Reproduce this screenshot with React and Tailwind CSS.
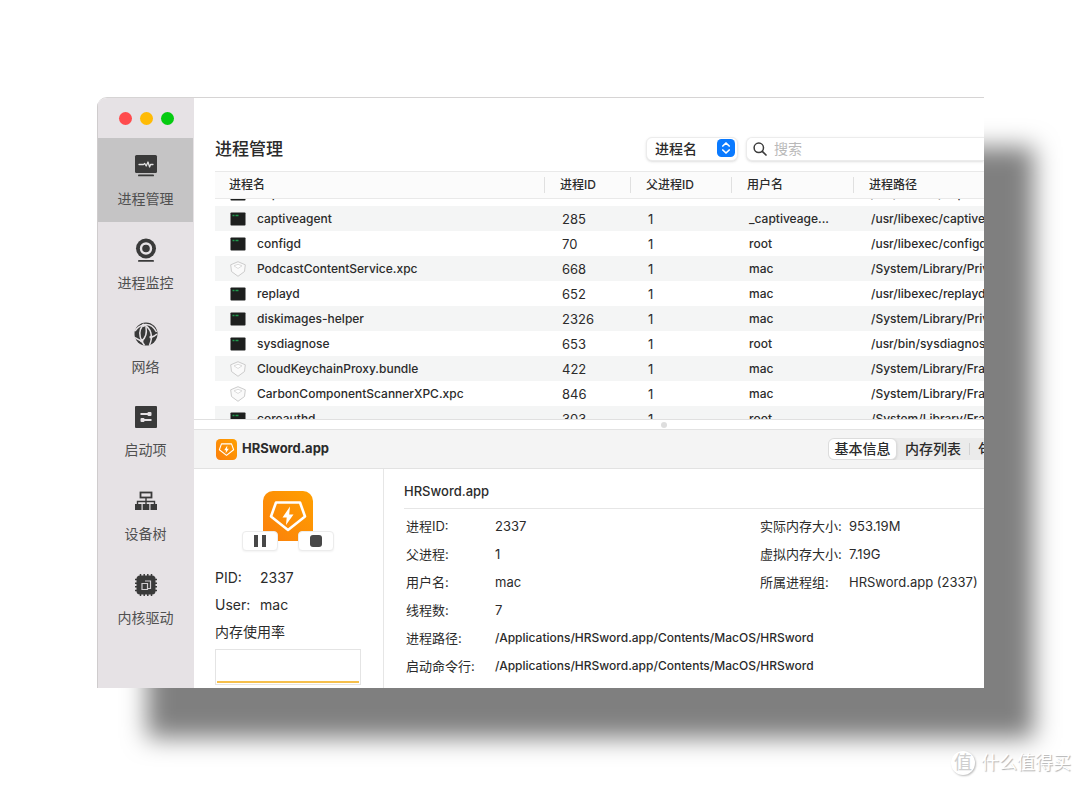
import { useLayoutEffect, useRef, useState } from "react";

const ink = "#3a3a3a";

function MonitorIcon() {
  return (
    <svg width="24" height="24" viewBox="0 0 24 24" aria-hidden="true">
      <rect x="1" y="1" width="22" height="18" rx="1.500" fill={ink} />
      <path d="M5 10.500h4.500l1.200-1 1.500 2.500 1.800-4 1.600 5 1-2.500H19" fill="none" stroke="#e0e0e0" strokeWidth="1.300" strokeLinejoin="round" strokeLinecap="round" />
      <rect x="4" y="20.500" width="16" height="1.800" rx=".9" fill={ink} />
    </svg>
  );
}

function CameraIcon() {
  return (
    <svg width="24" height="24" viewBox="0 0 24 24" aria-hidden="true">
      <circle cx="12" cy="10.500" r="10" fill={ink} />
      <circle cx="12" cy="10.500" r="5" fill="none" stroke="#e6e2e5" strokeWidth="2.400" />
      <rect x="4" y="22" width="16" height="1.800" rx=".9" fill={ink} />
    </svg>
  );
}

function NetworkIcon() {
  return (
    <svg width="24" height="24" viewBox="0 0 24 24" aria-hidden="true">
      <circle cx="12" cy="12" r="11.500" fill={ink} />
      <g fill="none" stroke="#e6e2e5" strokeWidth="1.500">
        <path d="M8.500 3.500C5 8.500 5 14 8 19.500l2.500 4" />
        <path d="M9.500 2.500C17 6 19.500 14 15.500 23" />
        <path d="M1 9C3 6 5.500 4 9 3" />
        <path d="M1 15.500c2.500 2 4.500 2.500 6.500 3.500" />
        <path d="M11 2.500C16 2 20 5 22.500 10" />
        <path d="M8 18.500C12 15.500 13 11 12 5" />
        <path d="M17.500 15c2.500-.5 4-1.500 5.500-3" />
      </g>
      <g fill="#e6e2e5">
        <circle cx="9.500" cy="3.300" r="1.700" />
        <circle cx="7.800" cy="18.700" r="1.800" />
        <circle cx="17" cy="15" r="1.600" />
      </g>
    </svg>
  );
}

function StartupIcon() {
  return (
    <svg width="24" height="24" viewBox="0 0 24 24" aria-hidden="true">
      <rect x="1" y="1" width="22" height="22" rx="1" fill={ink} />
      <path d="M6.500 9h10M7.500 15h10" stroke="#e6e2e5" strokeWidth="1.800" />
      <rect x="13.500" y="7" width="4" height="4" rx="1" fill="#e6e2e5" />
      <rect x="6.500" y="13" width="4" height="4" rx="1" fill="#e6e2e5" />
    </svg>
  );
}

function TreeIcon() {
  return (
    <svg width="24" height="24" viewBox="0 0 24 24" aria-hidden="true">
      <rect x="6.500" y="3.500" width="11" height="5" fill="none" stroke={ink} strokeWidth="1.800" />
      <path d="M12 9v6M3.500 15v-2.500h17V15" fill="none" stroke={ink} strokeWidth="1.400" />
      <path d="M1 15h6.500v6H1zM8.700 15h6.600v6H8.700zM16.500 15H23v6h-6.500z" fill={ink} />
    </svg>
  );
}

function ChipIcon() {
  return (
    <svg width="24" height="24" viewBox="0 0 24 24" aria-hidden="true">
      <path d="M6.500 1v22M10.200 1v22M13.800 1v22M17.500 1v22M1 6.500h22M1 10.200h22M1 13.800h22M1 17.500h22" stroke={ink} strokeWidth="1.500" />
      <rect x="2.500" y="2.500" width="19" height="19" rx="3.500" fill={ink} />
      <path d="M11 8h5.500v7.500H14M13.500 16.500H8V10.500h5.500z" fill="none" stroke="#cfcccf" strokeWidth="1.200" />
    </svg>
  );
}

function TerminalIcon() {
  return (
    <svg width="16" height="16" viewBox="0 0 16 16" aria-hidden="true">
      <rect x=".5" y="1.500" width="15" height="13" rx=".8" fill="#1d1f1e" />
      <path d="M2.500 4.500h2M5.500 4.500h3" stroke="#1f9a4c" strokeWidth="1.400" />
    </svg>
  );
}

function ShieldIcon() {
  return (
    <svg width="16" height="16" viewBox="0 0 16 16" aria-hidden="true">
      <path d="M8 .7 15.300 3.800 14.500 10.500 8 15.300 1.500 10.500.7 3.800z" fill="#fafafa" stroke="#cbcbcb" strokeWidth="1" strokeLinejoin="round" />
      <path d="M4 4.800 8 7.500l4-2.700-4-1.500z" fill="#fff" stroke="#d8d8d8" strokeWidth=".9" strokeLinejoin="round" />
    </svg>
  );
}

function AppIcon({ className, id }) {
  return (
    <svg className={className} viewBox="0 0 50 50" aria-hidden="true">
      <defs>
        <linearGradient id={id} x1="0" y1="1" x2="1" y2="0">
          <stop offset="0" stopColor="#fb7f0c" />
          <stop offset="1" stopColor="#ffa000" />
        </linearGradient>
      </defs>
      <rect width="50" height="50" rx="10" fill={`url(#${id})`} />
      <path d="M13 11.500h24l5 14L25 39 8 25.500z" fill="none" stroke="#fff" strokeWidth="2.600" strokeLinejoin="round" />
      <path d="M27 15.500 19.500 26.500h4.200L23 34l7.500-10.500h-4.300z" fill="#fff" />
    </svg>
  );
}

const sections = [
  { label: "进程管理", Icon: MonitorIcon },
  { label: "进程监控", Icon: CameraIcon },
  { label: "网络", Icon: NetworkIcon },
  { label: "启动项", Icon: StartupIcon },
  { label: "设备树", Icon: TreeIcon },
  { label: "内核驱动", Icon: ChipIcon },
];

const processes = [
  { icon: "terminal", name: "airportd", pid: "61", user: "root", path: "/usr/libexec/airportd" },
  { icon: "terminal", name: "captiveagent", pid: "285", user: "_captiveage...", path: "/usr/libexec/captiveagent" },
  { icon: "terminal", name: "configd", pid: "70", user: "root", path: "/usr/libexec/configd" },
  { icon: "shield", name: "PodcastContentService.xpc", pid: "668", user: "mac", path: "/System/Library/PrivateFrameworks" },
  { icon: "terminal", name: "replayd", pid: "652", user: "mac", path: "/usr/libexec/replayd" },
  { icon: "terminal", name: "diskimages-helper", pid: "2326", user: "mac", path: "/System/Library/PrivateFrameworks" },
  { icon: "terminal", name: "sysdiagnose", pid: "653", user: "root", path: "/usr/bin/sysdiagnose" },
  { icon: "shield", name: "CloudKeychainProxy.bundle", pid: "422", user: "mac", path: "/System/Library/Frameworks" },
  { icon: "shield", name: "CarbonComponentScannerXPC.xpc", pid: "846", user: "mac", path: "/System/Library/Frameworks" },
  { icon: "terminal", name: "coreauthd", pid: "303", user: "root", path: "/System/Library/Frameworks" },
];

const columns = ["进程名", "进程ID", "父进程ID", "用户名", "进程路径"];

function Sidebar() {
  const [active, setActive] = useState(0);
  return (
    <aside className="flex w-[97px] shrink-0 flex-col border-l border-[#cfcccd] bg-[#e6e2e5] pr-px pb-12">
      <div className="flex h-10 shrink-0 items-center gap-2 pl-[21px]">
        <span className="size-[13px] rounded-full bg-[#ff4b4d]" />
        <span className="size-[13px] rounded-full bg-[#ffbb05]" />
        <span className="size-[13px] rounded-full bg-[#05cb10]" />
      </div>
      <nav className="flex flex-1 flex-col">
        {sections.map(({ label, Icon }, i) => (
          <button
            key={label}
            type="button"
            onClick={() => setActive(i)}
            className={`flex flex-1 flex-col items-center justify-center gap-[11px] pt-1 text-sm leading-5 text-[#505050] ${i === active ? "bg-[#c5c4c5]" : ""}`}
          >
            <Icon />
            {label}
          </button>
        ))}
      </nav>
    </aside>
  );
}

function Toolbar() {
  return (
    <header className="flex h-[73px] shrink-0 items-end pb-[10px] pl-[21px]">
      <h1 className="text-[17px] leading-6 font-medium">进程管理</h1>
      <div className="ml-auto flex items-center gap-2">
        <div className="relative">
          <select aria-label="搜索范围" className="h-6 w-[92px] appearance-none rounded-md border border-[#ececec] bg-white pl-2 text-sm font-medium shadow-sm">
            <option>进程名</option>
            <option>进程ID</option>
          </select>
          <svg className="pointer-events-none absolute top-[3px] right-[3px]" width="18" height="18" viewBox="0 0 18 18" aria-hidden="true">
            <rect width="18" height="18" rx="4.500" fill="#0a7aff" />
            <path d="m5.800 7 3.200-3 3.200 3M5.800 11l3.200 3 3.200-3" fill="none" stroke="#fff" strokeWidth="1.700" strokeLinecap="round" strokeLinejoin="round" />
          </svg>
        </div>
        <label className="flex h-6 w-[238px] items-center gap-[7px] rounded-l-md border border-r-0 border-[#ececec] bg-white pl-1.5 shadow-sm">
          <svg width="14" height="14" viewBox="0 0 14 14" aria-hidden="true">
            <circle cx="5.800" cy="5.800" r="4.700" fill="none" stroke="#3c3c3c" strokeWidth="1.500" />
            <path d="m9.300 9.300 3.700 3.700" stroke="#3c3c3c" strokeWidth="1.700" strokeLinecap="round" />
          </svg>
          <input type="search" aria-label="搜索" placeholder="搜索" className="min-w-0 flex-1 bg-transparent text-sm outline-none placeholder:text-[#b9b9b9]" />
        </label>
      </div>
    </header>
  );
}

function ProcessTable() {
  const scroller = useRef(null);
  useLayoutEffect(() => {
    scroller.current.scrollTop = 18;
  }, []);
  return (
    <div ref={scroller} className="ml-[21px] h-[248px] shrink-0 overflow-hidden">
      <table className="w-full table-fixed border-separate border-spacing-0 text-left text-xs leading-5 font-medium">
        <colgroup>
          <col />
          <col className="w-[86px]" />
          <col className="w-[101px]" />
          <col className="w-[122px]" />
          <col className="w-[131px]" />
        </colgroup>
        <thead>
          <tr className="h-7">
            {columns.map((c, i) => (
              <th key={c} scope="col" className="sticky top-0 z-10 border-y border-[#e9e9e9] bg-[#fbfbfb] p-0 text-xs font-medium whitespace-nowrap">
                <span className={`block ${i ? "border-l border-[#e0e0e0] pl-[15px]" : "pl-3.5"}`}>{c}</span>
              </th>
            ))}
          </tr>
        </thead>
        <tbody>
          {processes.map((p) => (
            <tr key={p.name} className="h-[25px] odd:bg-white even:bg-[#f4f5f5]">
              <td className="p-0">
                <div className="flex items-center gap-[11px] pl-[15px]">
                  {p.icon === "shield" ? <ShieldIcon /> : <TerminalIcon />}
                  {p.name}
                </div>
              </td>
              <td className="p-0 pl-[18px] text-[13px] font-normal">{p.pid}</td>
              <td className="p-0 pl-[18px] text-[13px] font-normal">1</td>
              <td className="p-0 pl-[18px]">{p.user}</td>
              <td className="overflow-hidden p-0 pl-[18px] whitespace-nowrap">{p.path}</td>
            </tr>
          ))}
        </tbody>
      </table>
    </div>
  );
}

const facts = [
  ["进程ID:", "2337", "实际内存大小:", "953.19M"],
  ["父进程:", "1", "虚拟内存大小:", "7.19G"],
  ["用户名:", "mac", "所属进程组:", "HRSword.app (2337)"],
];
const executable = "/Applications/HRSword.app/Contents/MacOS/HRSword";

function Details() {
  return (
    <section className="flex flex-1 flex-col">
      <div className="flex h-[10px] shrink-0 items-center justify-center border-t border-[#e0e0e0] pl-[150px]">
        <span className="size-1.5 rounded-full bg-[#dedede]" />
      </div>
      <div className="flex h-10 shrink-0 items-center gap-[5px] border-y border-[#e2e2e2] bg-[#f4f4f4] pl-[22px]">
        <AppIcon id="badge" className="size-[21px]" />
        <h2 className="text-[13px] font-bold">HRSword.app</h2>
        <div className="ml-auto flex h-[22px] w-[156px] items-center overflow-hidden rounded-l-md bg-[#ebebeb] text-sm font-medium whitespace-nowrap">
          <button type="button" className="h-[22px] w-[69px] shrink-0 rounded-md border border-[#dcdcdc] bg-white shadow-sm">基本信息</button>
          <button type="button" className="h-[22px] w-[72px] shrink-0">内存列表</button>
          <span className="h-3 w-px shrink-0 bg-[#d2d2d2]" />
          <button type="button" className="h-[22px] shrink-0 pl-2">句柄列表</button>
        </div>
      </div>
      <div className="flex flex-1">
        <div className="flex w-[190px] shrink-0 flex-col border-r border-[#e6e6e6] pt-[22px] pr-[22px] pb-[3px] pl-[21px] text-sm leading-[27px]">
          <div className="relative flex h-[73px] justify-center">
            <AppIcon id="logo" className="size-[50px]" />
            <div className="absolute top-10 flex gap-5">
              <button type="button" aria-label="暂停" className="flex h-5 w-9 items-center justify-center gap-1 rounded-[4px] border border-[#ececec] bg-white shadow-xs">
                <span className="h-3 w-1 bg-[#484848]" />
                <span className="h-3 w-1 bg-[#484848]" />
              </button>
              <button type="button" aria-label="停止" className="flex h-5 w-9 items-center justify-center rounded-[4px] border border-[#ececec] bg-white shadow-xs">
                <span className="size-3 rounded-[3px] bg-[#484848]" />
              </button>
            </div>
          </div>
          <dl className="grid grid-cols-[45px_1fr]">
            <dt>PID:</dt>
            <dd>2337</dd>
            <dt>User:</dt>
            <dd>mac</dd>
          </dl>
          <h3>内存使用率</h3>
          <div className="mt-1 flex h-9 flex-col justify-end border border-[#e4e4e4] px-px pb-px">
            <span className="h-0.5 bg-[#f6c04d]" />
          </div>
        </div>
        <div className="flex-1 pt-2 pl-5">
          <h3 className="h-8 border-b border-[#e6e6e6] text-[13px] leading-7 font-medium">HRSword.app</h3>
          <dl className="grid grid-cols-[89px_1fr_89px_135px] pt-[3px] pl-0.5 text-[13px] leading-7 whitespace-nowrap">
            {facts.flat().map((text, i) => (i % 2 ? <dd key={i}>{text}</dd> : <dt key={i}>{text}</dt>))}
            <dt>线程数:</dt>
            <dd className="col-span-3">7</dd>
            <dt>进程路径:</dt>
            <dd className="col-span-3 text-xs leading-7 font-medium">{executable}</dd>
            <dt>启动命令行:</dt>
            <dd className="col-span-3 text-xs leading-7 font-medium">{executable}</dd>
          </dl>
        </div>
      </div>
    </section>
  );
}

export default function App() {
  return (
    <div className="flex min-h-screen flex-col bg-white pt-[97px] pr-24 pl-[97px] font-['Inter','Noto_Sans_CJK_SC',sans-serif] text-[#2b2b2b]">
      <main className="flex min-h-[591px] overflow-hidden rounded-tl-[10px] border-t border-[#d6d4d4] bg-white shadow-[50px_50px_24px_rgba(0,0,0,0.5)]">
        <Sidebar />
        <div className="flex min-w-0 flex-1 flex-col">
          <Toolbar />
          <ProcessTable />
          <Details />
        </div>
      </main>
      <footer className="mt-auto -mr-24 flex items-center justify-end gap-1.5 pr-[9px] pb-2 text-lg leading-7 text-white [text-shadow:1px_1px_1px_#b0b0b0]">
        <span className="flex size-6 items-center justify-center rounded-full bg-white text-[#cfcfcf] shadow-[1px_1px_2px_#bbb] [text-shadow:none]">值</span>
        什么值得买
      </footer>
    </div>
  );
}
